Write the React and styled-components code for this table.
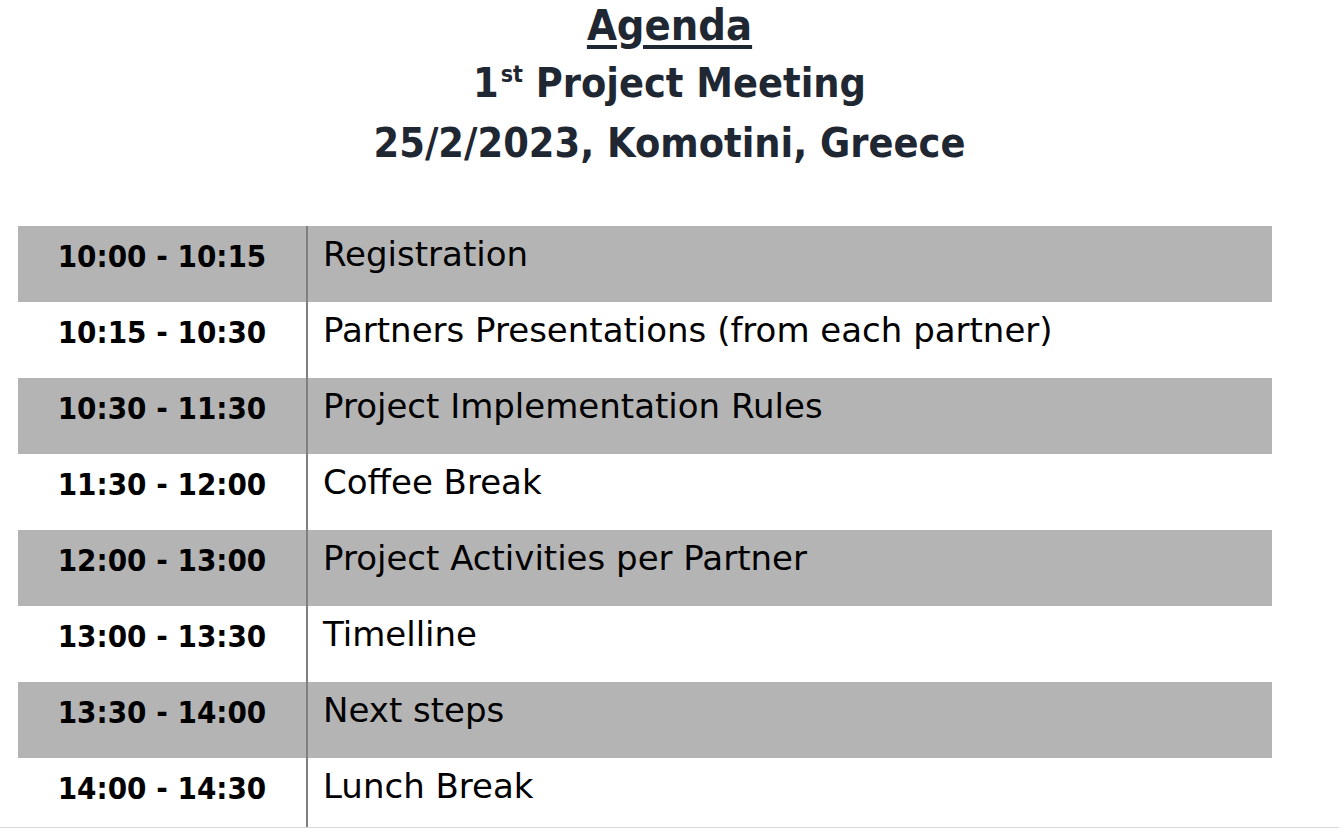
import React from "react";
import styled, { createGlobalStyle } from "styled-components";

const Global = createGlobalStyle`
  html, body { margin: 0; padding: 0; background: #ffffff; }
  body { font-family: "DejaVu Sans", sans-serif; color: #000; }
`;

const Page = styled.div`
  height: 827px;
  border-bottom: 1px solid #d9d9d9;
  overflow: hidden;
  background: #fff;
`;

const Header = styled.header`
  display: flex;
  flex-direction: column;
  align-items: center;
  color: #1f2733;
  font-family: "DejaVu Sans Condensed", "DejaVu Sans", sans-serif;
  font-weight: 700;
`;

const Title = styled.h1`
  margin: 0;
  font-size: 43px;
  line-height: 50px;
  font-weight: 700;
  text-decoration: underline;
  text-decoration-thickness: 4px;
  text-underline-offset: 5px;
`;

const SubLine = styled.div`
  font-size: 41px;
  line-height: 60px;
  margin-top: ${(p) => p.$mt || 0}px;
  white-space: nowrap;
`;

const Sup = styled.sup`
  font-size: 23px;
  line-height: 0;
  vertical-align: 15px;
  margin-left: 2px;
`;

const Table = styled.div`
  margin: 53px 0 0 18px;
  width: 1254px;
  display: flex;
  flex-direction: column;
`;

const Row = styled.div`
  display: grid;
  grid-template-columns: 288px 1fr;
  height: 76px;
  background: ${(p) => (p.$shaded ? "#b4b4b4" : "#ffffff")};
`;

const TimeCell = styled.div`
  font-family: "DejaVu Sans Condensed", "DejaVu Sans", sans-serif;
  font-weight: 700;
  font-size: 31px;
  text-align: center;
  padding-top: 12px;
  white-space: nowrap;
`;

const TopicCell = styled.div`
  border-left: 2px solid #7f7f7f;
  font-size: 34px;
  padding: 8px 0 0 15px;
  white-space: nowrap;
`;

const items = [
  ["10:00 - 10:15", "Registration"],
  ["10:15 - 10:30", "Partners Presentations (from each partner)"],
  ["10:30 - 11:30", "Project Implementation Rules"],
  ["11:30 - 12:00", "Coffee Break"],
  ["12:00 - 13:00", "Project Activities per Partner"],
  ["13:00 - 13:30", "Timelline"],
  ["13:30 - 14:00", "Next steps"],
  ["14:00 - 14:30", "Lunch Break"],
];

export default function App() {
  return (
    <Page>
      <Global />
      <Header>
        <Title>Agenda</Title>
        <SubLine $mt={3}>
          1<Sup>st</Sup> Project Meeting
        </SubLine>
        <SubLine>25/2/2023, Komotini, Greece</SubLine>
      </Header>
      <Table>
        {items.map(([time, topic], i) => (
          <Row key={time} $shaded={i % 2 === 0}>
            <TimeCell>{time}</TimeCell>
            <TopicCell>{topic}</TopicCell>
          </Row>
        ))}
      </Table>
    </Page>
  );
}
